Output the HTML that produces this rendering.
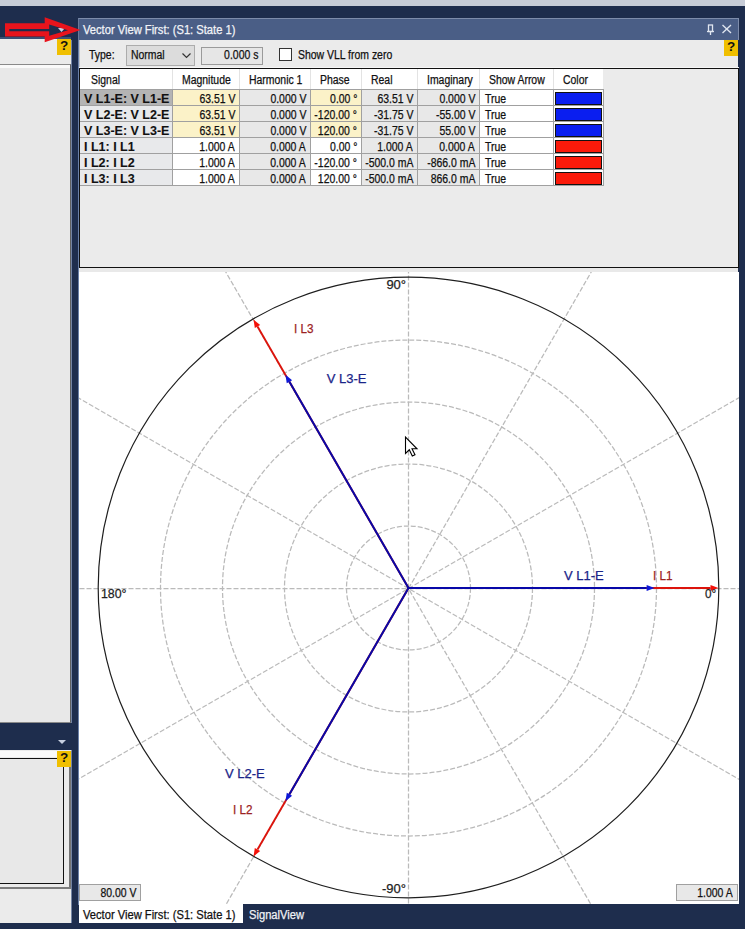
<!DOCTYPE html><html><head><meta charset="utf-8"><style>html,body{margin:0;padding:0;width:745px;height:929px;overflow:hidden;position:relative;font-family:'Liberation Sans',sans-serif;}</style></head><body>
<div style="position:absolute;left:0px;top:0px;width:745px;height:929px;background:#1e2d4d"></div>
<div style="position:absolute;left:0px;top:0px;width:745px;height:6px;background:#c7ccd7"></div>
<div style="position:absolute;left:0px;top:37px;width:71px;height:2px;background:#3a5075"></div>
<div style="position:absolute;left:0px;top:39px;width:71px;height:684px;background:#ebebeb"></div>
<div style="position:absolute;left:0px;top:64px;width:71px;height:659px;background:#e8e8e8;border-top:1px solid #8a8a8a;border-right:1px solid #606060;border-bottom:1px solid #8a8a8a;box-sizing:border-box"></div>
<div style="position:absolute;left:71px;top:40px;width:1px;height:683px;background:#7484a4"></div>
<div style="position:absolute;left:0px;top:65px;width:70px;height:3px;background:#fafafa"></div>
<div style="position:absolute;left:57px;top:39px;width:14px;height:16px;background:#f0bf00"></div>
<div style="position:absolute;left:57px;top:39px;width:14px;height:16px;line-height:14px;text-align:center;font-size:13.5px;font-weight:700;font-family:'Liberation Sans',sans-serif;color:#111">?</div>
<svg style="position:absolute;left:0;top:0" width="745" height="929"><polygon points="58,28 65,28 61.5,32" fill="#c8d0e0"/><polygon points="58,740 66,740 62,744" fill="#c8d0e0"/></svg>
<div style="position:absolute;left:0px;top:750px;width:72px;height:173px;background:#ebebeb;border-right:1px solid #9a9a9a;box-sizing:border-box"></div>
<div style="position:absolute;left:0px;top:751px;width:70px;height:6px;background:#fafafa"></div>
<div style="position:absolute;left:0px;top:758px;width:64px;height:126px;background:#e8e8e8;border:1px solid #111;border-left:none;box-sizing:border-box"></div>
<div style="position:absolute;left:69px;top:751px;width:1.5px;height:137px;background:#747474"></div>
<div style="position:absolute;left:71px;top:751px;width:1px;height:172px;background:#7484a4"></div>
<div style="position:absolute;left:0px;top:887px;width:70.5px;height:1.5px;background:#7c7c7c"></div>
<div style="position:absolute;left:57px;top:751px;width:14px;height:16px;background:#f0bf00"></div>
<div style="position:absolute;left:57px;top:751px;width:14px;height:16px;line-height:14px;text-align:center;font-size:13.5px;font-weight:700;font-family:'Liberation Sans',sans-serif;color:#111">?</div>
<div style="position:absolute;left:78px;top:18px;width:661px;height:22px;background:#4a5e86;border-top:1px solid #7d8cab;border-right:1px solid #7d8cab;border-left:1px solid #6a7a9a;box-sizing:border-box"></div>
<div style="position:absolute;left:83px;top:24.14px;line-height:12px;font-size:12px;font-family:'Liberation Sans',sans-serif;color:#f2f4f8;font-weight:400;white-space:nowrap;transform:scaleX(0.93);transform-origin:0 0;-webkit-text-stroke:0.25px currentColor;">Vector View First: (S1: State 1)</div>
<svg style="position:absolute;left:700px;top:20px" width="40" height="18">
<g stroke="#e0e6f0" stroke-width="1.3" fill="none">
<rect x="8.5" y="5" width="4" height="6.5"/><line x1="7" y1="11.5" x2="14" y2="11.5"/><line x1="10.5" y1="11.5" x2="10.5" y2="15"/>
<line x1="22.5" y1="5" x2="31" y2="13"/><line x1="31" y1="5" x2="22.5" y2="13"/>
</g></svg>
<div style="position:absolute;left:79px;top:40px;width:659px;height:28px;background:#ebebeb"></div>
<div style="position:absolute;left:724px;top:40px;width:14px;height:16px;background:#f0bf00"></div>
<div style="position:absolute;left:724px;top:40px;width:14px;height:16px;line-height:14px;text-align:center;font-size:13.5px;font-weight:700;font-family:'Liberation Sans',sans-serif;color:#111">?</div>
<div style="position:absolute;left:89px;top:49.34px;line-height:12px;font-size:12px;font-family:'Liberation Sans',sans-serif;color:#111;font-weight:400;white-space:nowrap;transform:scaleX(0.87);transform-origin:0 0;-webkit-text-stroke:0.25px currentColor;">Type:</div>
<div style="position:absolute;left:126px;top:45px;width:69px;height:21px;background:#dcdcdc;border:1px solid #acacac;box-sizing:border-box"></div>
<div style="position:absolute;left:131px;top:49.34px;line-height:12px;font-size:12px;font-family:'Liberation Sans',sans-serif;color:#111;font-weight:400;white-space:nowrap;transform:scaleX(0.87);transform-origin:0 0;-webkit-text-stroke:0.25px currentColor;">Normal</div>
<svg style="position:absolute;left:180px;top:51px" width="14" height="10"><polyline points="2.5,2.5 6.5,6.5 10.5,2.5" fill="none" stroke="#333" stroke-width="1.2"/></svg>
<div style="position:absolute;left:201px;top:47px;width:62px;height:18px;background:#e6e6e6;border:1px solid #9a9a9a;box-sizing:border-box"></div>
<div style="position:absolute;right:487px;top:49.34px;line-height:12px;font-size:12px;font-family:'Liberation Sans',sans-serif;color:#111;font-weight:400;white-space:nowrap;transform:scaleX(0.87);transform-origin:100% 0;-webkit-text-stroke:0.25px currentColor;">0.000 s</div>
<div style="position:absolute;left:279px;top:48px;width:13px;height:13px;background:#fff;border:1px solid #333;box-sizing:border-box"></div>
<div style="position:absolute;left:298px;top:49.34px;line-height:12px;font-size:12px;font-family:'Liberation Sans',sans-serif;color:#111;font-weight:400;white-space:nowrap;transform:scaleX(0.87);transform-origin:0 0;-webkit-text-stroke:0.25px currentColor;">Show VLL from zero</div>
<div style="position:absolute;left:79px;top:67px;width:660px;height:1px;background:#f6f6f6"></div>
<div style="position:absolute;left:78px;top:40px;width:1px;height:865px;background:#6a80a8"></div>
<div style="position:absolute;left:79px;top:40px;width:1px;height:27px;background:#c0c2c8"></div>
<div style="position:absolute;left:79px;top:68px;width:660px;height:200px;background:#ebebeb;border:1px solid #111;box-sizing:border-box"></div>
<div style="position:absolute;left:80px;top:69px;width:523px;height:20px;background:#fff"></div>
<div style="position:absolute;left:172px;top:69px;width:1px;height:20px;background:#e3e3e3"></div>
<div style="position:absolute;left:239px;top:69px;width:1px;height:20px;background:#e3e3e3"></div>
<div style="position:absolute;left:310px;top:69px;width:1px;height:20px;background:#e3e3e3"></div>
<div style="position:absolute;left:361px;top:69px;width:1px;height:20px;background:#e3e3e3"></div>
<div style="position:absolute;left:417px;top:69px;width:1px;height:20px;background:#e3e3e3"></div>
<div style="position:absolute;left:479px;top:69px;width:1px;height:20px;background:#e3e3e3"></div>
<div style="position:absolute;left:553px;top:69px;width:1px;height:20px;background:#e3e3e3"></div>
<div style="position:absolute;left:91px;top:73.84px;line-height:12px;font-size:12px;font-family:'Liberation Sans',sans-serif;color:#111;font-weight:400;white-space:nowrap;transform:scaleX(0.87);transform-origin:0 0;-webkit-text-stroke:0.25px currentColor;">Signal</div>
<div style="position:absolute;left:182px;top:73.84px;line-height:12px;font-size:12px;font-family:'Liberation Sans',sans-serif;color:#111;font-weight:400;white-space:nowrap;transform:scaleX(0.87);transform-origin:0 0;-webkit-text-stroke:0.25px currentColor;">Magnitude</div>
<div style="position:absolute;left:249px;top:73.84px;line-height:12px;font-size:12px;font-family:'Liberation Sans',sans-serif;color:#111;font-weight:400;white-space:nowrap;transform:scaleX(0.87);transform-origin:0 0;-webkit-text-stroke:0.25px currentColor;">Harmonic 1</div>
<div style="position:absolute;left:320px;top:73.84px;line-height:12px;font-size:12px;font-family:'Liberation Sans',sans-serif;color:#111;font-weight:400;white-space:nowrap;transform:scaleX(0.87);transform-origin:0 0;-webkit-text-stroke:0.25px currentColor;">Phase</div>
<div style="position:absolute;left:371px;top:73.84px;line-height:12px;font-size:12px;font-family:'Liberation Sans',sans-serif;color:#111;font-weight:400;white-space:nowrap;transform:scaleX(0.87);transform-origin:0 0;-webkit-text-stroke:0.25px currentColor;">Real</div>
<div style="position:absolute;left:427px;top:73.84px;line-height:12px;font-size:12px;font-family:'Liberation Sans',sans-serif;color:#111;font-weight:400;white-space:nowrap;transform:scaleX(0.87);transform-origin:0 0;-webkit-text-stroke:0.25px currentColor;">Imaginary</div>
<div style="position:absolute;left:489px;top:73.84px;line-height:12px;font-size:12px;font-family:'Liberation Sans',sans-serif;color:#111;font-weight:400;white-space:nowrap;transform:scaleX(0.87);transform-origin:0 0;-webkit-text-stroke:0.25px currentColor;">Show Arrow</div>
<div style="position:absolute;left:563px;top:73.84px;line-height:12px;font-size:12px;font-family:'Liberation Sans',sans-serif;color:#111;font-weight:400;white-space:nowrap;transform:scaleX(0.87);transform-origin:0 0;-webkit-text-stroke:0.25px currentColor;">Color</div>
<div style="position:absolute;left:80px;top:90px;width:92px;height:16px;background:#b4b4b4"></div>
<div style="position:absolute;left:172px;top:90px;width:67px;height:16px;background:#fbf2c8"></div>
<div style="position:absolute;left:239px;top:90px;width:71px;height:16px;background:#e8e8e8"></div>
<div style="position:absolute;left:310px;top:90px;width:51px;height:16px;background:#fbf2c8"></div>
<div style="position:absolute;left:361px;top:90px;width:56px;height:16px;background:#e8e8e8"></div>
<div style="position:absolute;left:417px;top:90px;width:62px;height:16px;background:#e8e8e8"></div>
<div style="position:absolute;left:479px;top:90px;width:74px;height:16px;background:#ffffff"></div>
<div style="position:absolute;left:553px;top:90px;width:50px;height:16px;background:#ffffff"></div>
<div style="position:absolute;left:555px;top:92px;width:47px;height:13px;background:#0a1ef0;border:1px solid #111;box-sizing:border-box"></div>
<div style="position:absolute;left:84px;top:92.92px;line-height:12.5px;font-size:12.5px;font-family:'Liberation Sans',sans-serif;color:#111;font-weight:700;white-space:nowrap;transform:scaleX(1.0);transform-origin:0 0;-webkit-text-stroke:0.1px #111;">V L1-E: V L1-E</div>
<div style="position:absolute;right:510px;top:93.34px;line-height:12px;font-size:12px;font-family:'Liberation Sans',sans-serif;color:#111;font-weight:400;white-space:nowrap;transform:scaleX(0.87);transform-origin:100% 0;-webkit-text-stroke:0.25px currentColor;">63.51 V</div>
<div style="position:absolute;right:439px;top:93.34px;line-height:12px;font-size:12px;font-family:'Liberation Sans',sans-serif;color:#111;font-weight:400;white-space:nowrap;transform:scaleX(0.87);transform-origin:100% 0;-webkit-text-stroke:0.25px currentColor;">0.000 V</div>
<div style="position:absolute;right:388px;top:93.34px;line-height:12px;font-size:12px;font-family:'Liberation Sans',sans-serif;color:#111;font-weight:400;white-space:nowrap;transform:scaleX(0.87);transform-origin:100% 0;-webkit-text-stroke:0.25px currentColor;">0.00 °</div>
<div style="position:absolute;right:332px;top:93.34px;line-height:12px;font-size:12px;font-family:'Liberation Sans',sans-serif;color:#111;font-weight:400;white-space:nowrap;transform:scaleX(0.87);transform-origin:100% 0;-webkit-text-stroke:0.25px currentColor;">63.51 V</div>
<div style="position:absolute;right:270px;top:93.34px;line-height:12px;font-size:12px;font-family:'Liberation Sans',sans-serif;color:#111;font-weight:400;white-space:nowrap;transform:scaleX(0.87);transform-origin:100% 0;-webkit-text-stroke:0.25px currentColor;">0.000 V</div>
<div style="position:absolute;left:485px;top:93.34px;line-height:12px;font-size:12px;font-family:'Liberation Sans',sans-serif;color:#111;font-weight:400;white-space:nowrap;transform:scaleX(0.87);transform-origin:0 0;-webkit-text-stroke:0.25px currentColor;">True</div>
<div style="position:absolute;left:80px;top:106px;width:92px;height:16px;background:#e8e9eb"></div>
<div style="position:absolute;left:172px;top:106px;width:67px;height:16px;background:#fbf2c8"></div>
<div style="position:absolute;left:239px;top:106px;width:71px;height:16px;background:#e8e8e8"></div>
<div style="position:absolute;left:310px;top:106px;width:51px;height:16px;background:#fbf2c8"></div>
<div style="position:absolute;left:361px;top:106px;width:56px;height:16px;background:#e8e8e8"></div>
<div style="position:absolute;left:417px;top:106px;width:62px;height:16px;background:#e8e8e8"></div>
<div style="position:absolute;left:479px;top:106px;width:74px;height:16px;background:#ffffff"></div>
<div style="position:absolute;left:553px;top:106px;width:50px;height:16px;background:#ffffff"></div>
<div style="position:absolute;left:555px;top:108px;width:47px;height:13px;background:#0a1ef0;border:1px solid #111;box-sizing:border-box"></div>
<div style="position:absolute;left:84px;top:108.92px;line-height:12.5px;font-size:12.5px;font-family:'Liberation Sans',sans-serif;color:#111;font-weight:700;white-space:nowrap;transform:scaleX(1.0);transform-origin:0 0;-webkit-text-stroke:0.1px #111;">V L2-E: V L2-E</div>
<div style="position:absolute;right:510px;top:109.34px;line-height:12px;font-size:12px;font-family:'Liberation Sans',sans-serif;color:#111;font-weight:400;white-space:nowrap;transform:scaleX(0.87);transform-origin:100% 0;-webkit-text-stroke:0.25px currentColor;">63.51 V</div>
<div style="position:absolute;right:439px;top:109.34px;line-height:12px;font-size:12px;font-family:'Liberation Sans',sans-serif;color:#111;font-weight:400;white-space:nowrap;transform:scaleX(0.87);transform-origin:100% 0;-webkit-text-stroke:0.25px currentColor;">0.000 V</div>
<div style="position:absolute;right:388px;top:109.34px;line-height:12px;font-size:12px;font-family:'Liberation Sans',sans-serif;color:#111;font-weight:400;white-space:nowrap;transform:scaleX(0.87);transform-origin:100% 0;-webkit-text-stroke:0.25px currentColor;">-120.00 °</div>
<div style="position:absolute;right:332px;top:109.34px;line-height:12px;font-size:12px;font-family:'Liberation Sans',sans-serif;color:#111;font-weight:400;white-space:nowrap;transform:scaleX(0.87);transform-origin:100% 0;-webkit-text-stroke:0.25px currentColor;">-31.75 V</div>
<div style="position:absolute;right:270px;top:109.34px;line-height:12px;font-size:12px;font-family:'Liberation Sans',sans-serif;color:#111;font-weight:400;white-space:nowrap;transform:scaleX(0.87);transform-origin:100% 0;-webkit-text-stroke:0.25px currentColor;">-55.00 V</div>
<div style="position:absolute;left:485px;top:109.34px;line-height:12px;font-size:12px;font-family:'Liberation Sans',sans-serif;color:#111;font-weight:400;white-space:nowrap;transform:scaleX(0.87);transform-origin:0 0;-webkit-text-stroke:0.25px currentColor;">True</div>
<div style="position:absolute;left:80px;top:122px;width:92px;height:16px;background:#e8e9eb"></div>
<div style="position:absolute;left:172px;top:122px;width:67px;height:16px;background:#fbf2c8"></div>
<div style="position:absolute;left:239px;top:122px;width:71px;height:16px;background:#e8e8e8"></div>
<div style="position:absolute;left:310px;top:122px;width:51px;height:16px;background:#fbf2c8"></div>
<div style="position:absolute;left:361px;top:122px;width:56px;height:16px;background:#e8e8e8"></div>
<div style="position:absolute;left:417px;top:122px;width:62px;height:16px;background:#e8e8e8"></div>
<div style="position:absolute;left:479px;top:122px;width:74px;height:16px;background:#ffffff"></div>
<div style="position:absolute;left:553px;top:122px;width:50px;height:16px;background:#ffffff"></div>
<div style="position:absolute;left:555px;top:124px;width:47px;height:13px;background:#0a1ef0;border:1px solid #111;box-sizing:border-box"></div>
<div style="position:absolute;left:84px;top:124.92px;line-height:12.5px;font-size:12.5px;font-family:'Liberation Sans',sans-serif;color:#111;font-weight:700;white-space:nowrap;transform:scaleX(1.0);transform-origin:0 0;-webkit-text-stroke:0.1px #111;">V L3-E: V L3-E</div>
<div style="position:absolute;right:510px;top:125.34px;line-height:12px;font-size:12px;font-family:'Liberation Sans',sans-serif;color:#111;font-weight:400;white-space:nowrap;transform:scaleX(0.87);transform-origin:100% 0;-webkit-text-stroke:0.25px currentColor;">63.51 V</div>
<div style="position:absolute;right:439px;top:125.34px;line-height:12px;font-size:12px;font-family:'Liberation Sans',sans-serif;color:#111;font-weight:400;white-space:nowrap;transform:scaleX(0.87);transform-origin:100% 0;-webkit-text-stroke:0.25px currentColor;">0.000 V</div>
<div style="position:absolute;right:388px;top:125.34px;line-height:12px;font-size:12px;font-family:'Liberation Sans',sans-serif;color:#111;font-weight:400;white-space:nowrap;transform:scaleX(0.87);transform-origin:100% 0;-webkit-text-stroke:0.25px currentColor;">120.00 °</div>
<div style="position:absolute;right:332px;top:125.34px;line-height:12px;font-size:12px;font-family:'Liberation Sans',sans-serif;color:#111;font-weight:400;white-space:nowrap;transform:scaleX(0.87);transform-origin:100% 0;-webkit-text-stroke:0.25px currentColor;">-31.75 V</div>
<div style="position:absolute;right:270px;top:125.34px;line-height:12px;font-size:12px;font-family:'Liberation Sans',sans-serif;color:#111;font-weight:400;white-space:nowrap;transform:scaleX(0.87);transform-origin:100% 0;-webkit-text-stroke:0.25px currentColor;">55.00 V</div>
<div style="position:absolute;left:485px;top:125.34px;line-height:12px;font-size:12px;font-family:'Liberation Sans',sans-serif;color:#111;font-weight:400;white-space:nowrap;transform:scaleX(0.87);transform-origin:0 0;-webkit-text-stroke:0.25px currentColor;">True</div>
<div style="position:absolute;left:80px;top:138px;width:92px;height:16px;background:#e8e9eb"></div>
<div style="position:absolute;left:172px;top:138px;width:67px;height:16px;background:#ffffff"></div>
<div style="position:absolute;left:239px;top:138px;width:71px;height:16px;background:#e8e8e8"></div>
<div style="position:absolute;left:310px;top:138px;width:51px;height:16px;background:#ffffff"></div>
<div style="position:absolute;left:361px;top:138px;width:56px;height:16px;background:#e8e8e8"></div>
<div style="position:absolute;left:417px;top:138px;width:62px;height:16px;background:#e8e8e8"></div>
<div style="position:absolute;left:479px;top:138px;width:74px;height:16px;background:#ffffff"></div>
<div style="position:absolute;left:553px;top:138px;width:50px;height:16px;background:#ffffff"></div>
<div style="position:absolute;left:555px;top:140px;width:47px;height:13px;background:#fa1a0a;border:1px solid #111;box-sizing:border-box"></div>
<div style="position:absolute;left:84px;top:140.92px;line-height:12.5px;font-size:12.5px;font-family:'Liberation Sans',sans-serif;color:#111;font-weight:700;white-space:nowrap;transform:scaleX(1.0);transform-origin:0 0;-webkit-text-stroke:0.1px #111;">I L1: I L1</div>
<div style="position:absolute;right:510px;top:141.34px;line-height:12px;font-size:12px;font-family:'Liberation Sans',sans-serif;color:#111;font-weight:400;white-space:nowrap;transform:scaleX(0.87);transform-origin:100% 0;-webkit-text-stroke:0.25px currentColor;">1.000 A</div>
<div style="position:absolute;right:439px;top:141.34px;line-height:12px;font-size:12px;font-family:'Liberation Sans',sans-serif;color:#111;font-weight:400;white-space:nowrap;transform:scaleX(0.87);transform-origin:100% 0;-webkit-text-stroke:0.25px currentColor;">0.000 A</div>
<div style="position:absolute;right:388px;top:141.34px;line-height:12px;font-size:12px;font-family:'Liberation Sans',sans-serif;color:#111;font-weight:400;white-space:nowrap;transform:scaleX(0.87);transform-origin:100% 0;-webkit-text-stroke:0.25px currentColor;">0.00 °</div>
<div style="position:absolute;right:332px;top:141.34px;line-height:12px;font-size:12px;font-family:'Liberation Sans',sans-serif;color:#111;font-weight:400;white-space:nowrap;transform:scaleX(0.87);transform-origin:100% 0;-webkit-text-stroke:0.25px currentColor;">1.000 A</div>
<div style="position:absolute;right:270px;top:141.34px;line-height:12px;font-size:12px;font-family:'Liberation Sans',sans-serif;color:#111;font-weight:400;white-space:nowrap;transform:scaleX(0.87);transform-origin:100% 0;-webkit-text-stroke:0.25px currentColor;">0.000 A</div>
<div style="position:absolute;left:485px;top:141.34px;line-height:12px;font-size:12px;font-family:'Liberation Sans',sans-serif;color:#111;font-weight:400;white-space:nowrap;transform:scaleX(0.87);transform-origin:0 0;-webkit-text-stroke:0.25px currentColor;">True</div>
<div style="position:absolute;left:80px;top:154px;width:92px;height:16px;background:#e8e9eb"></div>
<div style="position:absolute;left:172px;top:154px;width:67px;height:16px;background:#ffffff"></div>
<div style="position:absolute;left:239px;top:154px;width:71px;height:16px;background:#e8e8e8"></div>
<div style="position:absolute;left:310px;top:154px;width:51px;height:16px;background:#ffffff"></div>
<div style="position:absolute;left:361px;top:154px;width:56px;height:16px;background:#e8e8e8"></div>
<div style="position:absolute;left:417px;top:154px;width:62px;height:16px;background:#e8e8e8"></div>
<div style="position:absolute;left:479px;top:154px;width:74px;height:16px;background:#ffffff"></div>
<div style="position:absolute;left:553px;top:154px;width:50px;height:16px;background:#ffffff"></div>
<div style="position:absolute;left:555px;top:156px;width:47px;height:13px;background:#fa1a0a;border:1px solid #111;box-sizing:border-box"></div>
<div style="position:absolute;left:84px;top:156.92px;line-height:12.5px;font-size:12.5px;font-family:'Liberation Sans',sans-serif;color:#111;font-weight:700;white-space:nowrap;transform:scaleX(1.0);transform-origin:0 0;-webkit-text-stroke:0.1px #111;">I L2: I L2</div>
<div style="position:absolute;right:510px;top:157.34px;line-height:12px;font-size:12px;font-family:'Liberation Sans',sans-serif;color:#111;font-weight:400;white-space:nowrap;transform:scaleX(0.87);transform-origin:100% 0;-webkit-text-stroke:0.25px currentColor;">1.000 A</div>
<div style="position:absolute;right:439px;top:157.34px;line-height:12px;font-size:12px;font-family:'Liberation Sans',sans-serif;color:#111;font-weight:400;white-space:nowrap;transform:scaleX(0.87);transform-origin:100% 0;-webkit-text-stroke:0.25px currentColor;">0.000 A</div>
<div style="position:absolute;right:388px;top:157.34px;line-height:12px;font-size:12px;font-family:'Liberation Sans',sans-serif;color:#111;font-weight:400;white-space:nowrap;transform:scaleX(0.87);transform-origin:100% 0;-webkit-text-stroke:0.25px currentColor;">-120.00 °</div>
<div style="position:absolute;right:332px;top:157.34px;line-height:12px;font-size:12px;font-family:'Liberation Sans',sans-serif;color:#111;font-weight:400;white-space:nowrap;transform:scaleX(0.87);transform-origin:100% 0;-webkit-text-stroke:0.25px currentColor;">-500.0 mA</div>
<div style="position:absolute;right:270px;top:157.34px;line-height:12px;font-size:12px;font-family:'Liberation Sans',sans-serif;color:#111;font-weight:400;white-space:nowrap;transform:scaleX(0.87);transform-origin:100% 0;-webkit-text-stroke:0.25px currentColor;">-866.0 mA</div>
<div style="position:absolute;left:485px;top:157.34px;line-height:12px;font-size:12px;font-family:'Liberation Sans',sans-serif;color:#111;font-weight:400;white-space:nowrap;transform:scaleX(0.87);transform-origin:0 0;-webkit-text-stroke:0.25px currentColor;">True</div>
<div style="position:absolute;left:80px;top:170px;width:92px;height:16px;background:#e8e9eb"></div>
<div style="position:absolute;left:172px;top:170px;width:67px;height:16px;background:#ffffff"></div>
<div style="position:absolute;left:239px;top:170px;width:71px;height:16px;background:#e8e8e8"></div>
<div style="position:absolute;left:310px;top:170px;width:51px;height:16px;background:#ffffff"></div>
<div style="position:absolute;left:361px;top:170px;width:56px;height:16px;background:#e8e8e8"></div>
<div style="position:absolute;left:417px;top:170px;width:62px;height:16px;background:#e8e8e8"></div>
<div style="position:absolute;left:479px;top:170px;width:74px;height:16px;background:#ffffff"></div>
<div style="position:absolute;left:553px;top:170px;width:50px;height:16px;background:#ffffff"></div>
<div style="position:absolute;left:555px;top:172px;width:47px;height:13px;background:#fa1a0a;border:1px solid #111;box-sizing:border-box"></div>
<div style="position:absolute;left:84px;top:172.92px;line-height:12.5px;font-size:12.5px;font-family:'Liberation Sans',sans-serif;color:#111;font-weight:700;white-space:nowrap;transform:scaleX(1.0);transform-origin:0 0;-webkit-text-stroke:0.1px #111;">I L3: I L3</div>
<div style="position:absolute;right:510px;top:173.34px;line-height:12px;font-size:12px;font-family:'Liberation Sans',sans-serif;color:#111;font-weight:400;white-space:nowrap;transform:scaleX(0.87);transform-origin:100% 0;-webkit-text-stroke:0.25px currentColor;">1.000 A</div>
<div style="position:absolute;right:439px;top:173.34px;line-height:12px;font-size:12px;font-family:'Liberation Sans',sans-serif;color:#111;font-weight:400;white-space:nowrap;transform:scaleX(0.87);transform-origin:100% 0;-webkit-text-stroke:0.25px currentColor;">0.000 A</div>
<div style="position:absolute;right:388px;top:173.34px;line-height:12px;font-size:12px;font-family:'Liberation Sans',sans-serif;color:#111;font-weight:400;white-space:nowrap;transform:scaleX(0.87);transform-origin:100% 0;-webkit-text-stroke:0.25px currentColor;">120.00 °</div>
<div style="position:absolute;right:332px;top:173.34px;line-height:12px;font-size:12px;font-family:'Liberation Sans',sans-serif;color:#111;font-weight:400;white-space:nowrap;transform:scaleX(0.87);transform-origin:100% 0;-webkit-text-stroke:0.25px currentColor;">-500.0 mA</div>
<div style="position:absolute;right:270px;top:173.34px;line-height:12px;font-size:12px;font-family:'Liberation Sans',sans-serif;color:#111;font-weight:400;white-space:nowrap;transform:scaleX(0.87);transform-origin:100% 0;-webkit-text-stroke:0.25px currentColor;">866.0 mA</div>
<div style="position:absolute;left:485px;top:173.34px;line-height:12px;font-size:12px;font-family:'Liberation Sans',sans-serif;color:#111;font-weight:400;white-space:nowrap;transform:scaleX(0.87);transform-origin:0 0;-webkit-text-stroke:0.25px currentColor;">True</div>
<div style="position:absolute;left:80px;top:89px;width:523px;height:1px;background:#a0a0a0"></div>
<div style="position:absolute;left:80px;top:105px;width:523px;height:1px;background:#a0a0a0"></div>
<div style="position:absolute;left:80px;top:121px;width:523px;height:1px;background:#a0a0a0"></div>
<div style="position:absolute;left:80px;top:137px;width:523px;height:1px;background:#a0a0a0"></div>
<div style="position:absolute;left:80px;top:153px;width:523px;height:1px;background:#a0a0a0"></div>
<div style="position:absolute;left:80px;top:169px;width:523px;height:1px;background:#a0a0a0"></div>
<div style="position:absolute;left:80px;top:185px;width:523px;height:1px;background:#a0a0a0"></div>
<div style="position:absolute;left:172px;top:89px;width:1px;height:97px;background:#a0a0a0"></div>
<div style="position:absolute;left:239px;top:89px;width:1px;height:97px;background:#a0a0a0"></div>
<div style="position:absolute;left:310px;top:89px;width:1px;height:97px;background:#a0a0a0"></div>
<div style="position:absolute;left:361px;top:89px;width:1px;height:97px;background:#a0a0a0"></div>
<div style="position:absolute;left:417px;top:89px;width:1px;height:97px;background:#a0a0a0"></div>
<div style="position:absolute;left:479px;top:89px;width:1px;height:97px;background:#a0a0a0"></div>
<div style="position:absolute;left:553px;top:89px;width:1px;height:97px;background:#a0a0a0"></div>
<div style="position:absolute;left:603px;top:89px;width:1px;height:97px;background:#a0a0a0"></div>
<div style="position:absolute;left:79px;top:268px;width:659px;height:4px;background:#e9e9e9"></div>
<div style="position:absolute;left:79px;top:272px;width:660px;height:632px;background:#ffffff"></div>
<svg style="position:absolute;left:0;top:0" width="745" height="929" viewBox="0 0 745 929"><defs><clipPath id="cp"><rect x="79" y="272" width="660" height="632"/></clipPath></defs><g clip-path="url(#cp)"><circle cx="408.5" cy="588.0" r="62.0" fill="none" stroke="#bababa" stroke-width="1.25" stroke-dasharray="5 2"/><circle cx="408.5" cy="588.0" r="124.0" fill="none" stroke="#bababa" stroke-width="1.25" stroke-dasharray="5 2"/><circle cx="408.5" cy="588.0" r="186.0" fill="none" stroke="#bababa" stroke-width="1.25" stroke-dasharray="5 2"/><circle cx="408.5" cy="588.0" r="248.0" fill="none" stroke="#bababa" stroke-width="1.25" stroke-dasharray="5 2"/><line x1="-291.50" y1="588.50" x2="1108.50" y2="588.50" stroke="#bababa" stroke-width="1.25" stroke-dasharray="5 2"/><line x1="-197.72" y1="938.50" x2="1014.72" y2="238.50" stroke="#bababa" stroke-width="1.25" stroke-dasharray="5 2"/><line x1="58.50" y1="1194.72" x2="758.50" y2="-17.72" stroke="#bababa" stroke-width="1.25" stroke-dasharray="5 2"/><line x1="408.50" y1="1288.50" x2="408.50" y2="-111.50" stroke="#bababa" stroke-width="1.25" stroke-dasharray="5 2"/><line x1="758.50" y1="1194.72" x2="58.50" y2="-17.72" stroke="#bababa" stroke-width="1.25" stroke-dasharray="5 2"/><line x1="1014.72" y1="938.50" x2="-197.72" y2="238.50" stroke="#bababa" stroke-width="1.25" stroke-dasharray="5 2"/><circle cx="408.5" cy="587.5" r="310.3" fill="none" stroke="#1e1e1e" stroke-width="1.2"/><line x1="408.5" y1="588.0" x2="710.50" y2="588.00" stroke="#dc140c" stroke-width="1.9"/><polygon points="718.50,588.00 710.50,591.10 710.50,584.90" fill="#f41008"/><line x1="408.5" y1="588.0" x2="257.50" y2="849.54" stroke="#dc140c" stroke-width="1.9"/><polygon points="253.50,856.47 254.82,847.99 260.18,851.09" fill="#f41008"/><line x1="408.5" y1="588.0" x2="257.50" y2="326.46" stroke="#dc140c" stroke-width="1.9"/><polygon points="253.50,319.53 260.18,324.91 254.82,328.01" fill="#f41008"/><line x1="408.5" y1="588.0" x2="646.60" y2="588.00" stroke="#0808a8" stroke-width="2"/><polygon points="654.60,588.00 646.60,591.10 646.60,584.90" fill="#0c18d8"/><line x1="408.5" y1="588.0" x2="289.45" y2="794.20" stroke="#0808a8" stroke-width="2"/><polygon points="285.45,801.13 286.76,792.65 292.13,795.75" fill="#0c18d8"/><line x1="408.5" y1="588.0" x2="289.45" y2="381.80" stroke="#0808a8" stroke-width="2"/><polygon points="285.45,374.87 292.13,380.25 286.76,383.35" fill="#0c18d8"/></g><path d="M405.5,437 L405.5,453.5 L409.3,449.8 L412.3,456 L415,454.8 L412,448.8 L417,448.8 Z" fill="#fff" stroke="#000" stroke-width="1.1" stroke-linejoin="miter"/></svg>
<div style="position:absolute;left:386.4px;top:277.70px;line-height:13px;font-size:13px;font-family:'Liberation Sans',sans-serif;color:#222;font-weight:400;white-space:nowrap;transform:scaleX(1.0);transform-origin:0 0;-webkit-text-stroke:0.25px currentColor;">90°</div>
<div style="position:absolute;left:382px;top:882.00px;line-height:13px;font-size:13px;font-family:'Liberation Sans',sans-serif;color:#222;font-weight:400;white-space:nowrap;transform:scaleX(1.0);transform-origin:0 0;-webkit-text-stroke:0.25px currentColor;">-90°</div>
<div style="position:absolute;left:101.3px;top:587.20px;line-height:13px;font-size:13px;font-family:'Liberation Sans',sans-serif;color:#222;font-weight:400;white-space:nowrap;transform:scaleX(0.95);transform-origin:0 0;-webkit-text-stroke:0.25px currentColor;">180°</div>
<div style="position:absolute;left:704.5px;top:587.20px;line-height:13px;font-size:13px;font-family:'Liberation Sans',sans-serif;color:#222;font-weight:400;white-space:nowrap;transform:scaleX(0.9);transform-origin:0 0;-webkit-text-stroke:0.25px currentColor;">0°</div>
<div style="position:absolute;left:564px;top:568.90px;line-height:13px;font-size:13px;font-family:'Liberation Sans',sans-serif;color:#1a2488;font-weight:400;white-space:nowrap;transform:scaleX(1.0);transform-origin:0 0;-webkit-text-stroke:0.25px currentColor;">V L1-E</div>
<div style="position:absolute;left:653px;top:568.90px;line-height:13px;font-size:13px;font-family:'Liberation Sans',sans-serif;color:#9c2222;font-weight:400;white-space:nowrap;transform:scaleX(0.9);transform-origin:0 0;-webkit-text-stroke:0.25px currentColor;">I L1</div>
<div style="position:absolute;left:326.8px;top:372.00px;line-height:13px;font-size:13px;font-family:'Liberation Sans',sans-serif;color:#1a2488;font-weight:400;white-space:nowrap;transform:scaleX(1.0);transform-origin:0 0;-webkit-text-stroke:0.25px currentColor;">V L3-E</div>
<div style="position:absolute;left:293.6px;top:321.70px;line-height:13px;font-size:13px;font-family:'Liberation Sans',sans-serif;color:#9c2222;font-weight:400;white-space:nowrap;transform:scaleX(0.9);transform-origin:0 0;-webkit-text-stroke:0.25px currentColor;">I L3</div>
<div style="position:absolute;left:225px;top:766.70px;line-height:13px;font-size:13px;font-family:'Liberation Sans',sans-serif;color:#1a2488;font-weight:400;white-space:nowrap;transform:scaleX(1.0);transform-origin:0 0;-webkit-text-stroke:0.25px currentColor;">V L2-E</div>
<div style="position:absolute;left:232.7px;top:802.80px;line-height:13px;font-size:13px;font-family:'Liberation Sans',sans-serif;color:#9c2222;font-weight:400;white-space:nowrap;transform:scaleX(0.9);transform-origin:0 0;-webkit-text-stroke:0.25px currentColor;">I L2</div>
<div style="position:absolute;left:79px;top:884px;width:62px;height:17px;background:#e8e8e8;border:1px solid #a0a0a0;box-sizing:border-box"></div>
<div style="position:absolute;right:609px;top:886.84px;line-height:12px;font-size:12px;font-family:'Liberation Sans',sans-serif;color:#111;font-weight:400;white-space:nowrap;transform:scaleX(0.87);transform-origin:100% 0;-webkit-text-stroke:0.25px currentColor;">80.00 V</div>
<div style="position:absolute;left:676px;top:884px;width:62px;height:17px;background:#e8e8e8;border:1px solid #a0a0a0;box-sizing:border-box"></div>
<div style="position:absolute;right:12px;top:886.84px;line-height:12px;font-size:12px;font-family:'Liberation Sans',sans-serif;color:#111;font-weight:400;white-space:nowrap;transform:scaleX(0.87);transform-origin:100% 0;-webkit-text-stroke:0.25px currentColor;">1.000 A</div>
<div style="position:absolute;left:79px;top:904px;width:164px;height:19px;background:#ffffff"></div>
<div style="position:absolute;left:83px;top:909.14px;line-height:12px;font-size:12px;font-family:'Liberation Sans',sans-serif;color:#111;font-weight:400;white-space:nowrap;transform:scaleX(0.93);transform-origin:0 0;-webkit-text-stroke:0.25px currentColor;">Vector View First: (S1: State 1)</div>
<div style="position:absolute;left:248.5px;top:909.14px;line-height:12px;font-size:12px;font-family:'Liberation Sans',sans-serif;color:#f0f2f6;font-weight:400;white-space:nowrap;transform:scaleX(0.93);transform-origin:0 0;-webkit-text-stroke:0.25px currentColor;">SignalView</div>
<svg style="position:absolute;left:0;top:0" width="745" height="929">
<path d="M5,23.2 L44.7,23.2 L44.7,17.2 L80.5,30 L44.7,42.2 L44.7,36.6 L5,36.6 Z M9.3,28.9 L9.3,31.2 L49.2,31.2 L49.2,35.8 L68,30.2 L49.2,24.6 L49.2,28.9 Z" fill="#e8141c" fill-rule="evenodd"/>
</svg>
</body></html>
